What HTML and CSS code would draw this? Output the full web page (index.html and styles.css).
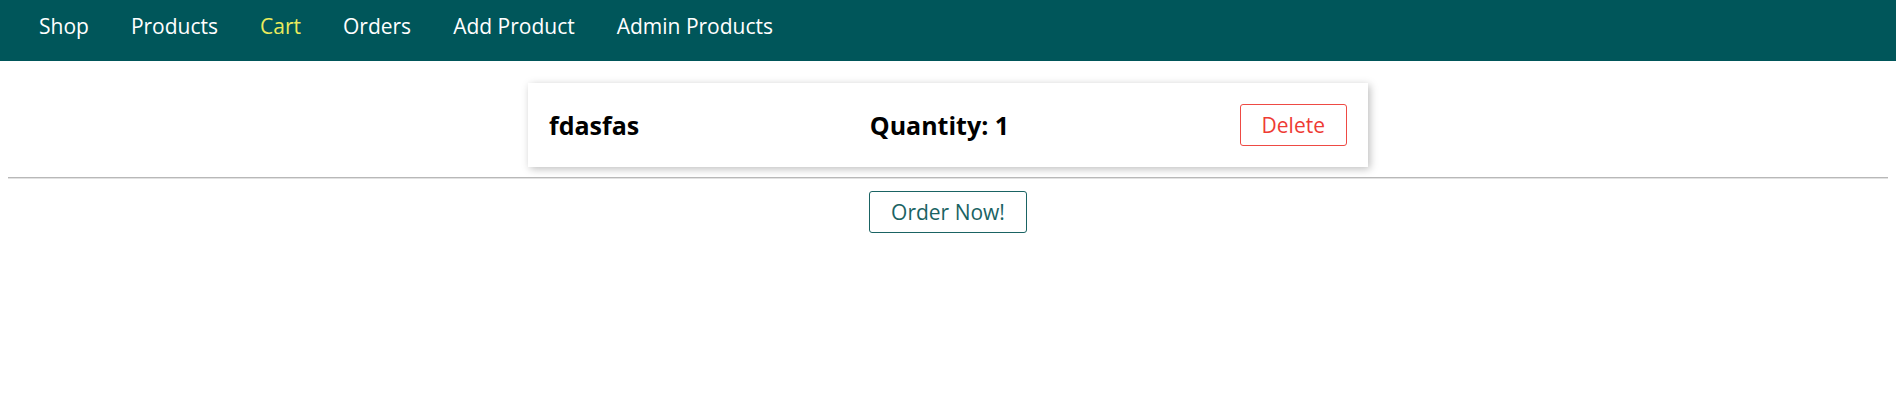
FILE: index.html
```html
<!DOCTYPE html>
<html lang="en">
<head>
<meta charset="UTF-8">
<title>Your Cart</title>
<link rel="stylesheet" href="styles.css">
</head>
<body>
<header class="main-header">
  <nav class="main-header__nav">
    <ul class="main-header__item-list">
      <li class="main-header__item"><a href="#">Shop</a></li>
      <li class="main-header__item"><a href="#">Products</a></li>
      <li class="main-header__item"><a class="active" href="#">Cart</a></li>
      <li class="main-header__item"><a href="#">Orders</a></li>
      <li class="main-header__item"><a href="#">Add Product</a></li>
      <li class="main-header__item"><a href="#">Admin Products</a></li>
    </ul>
  </nav>
</header>
<main class="main">
  <ul class="cart__item-list">
    <li class="cart__item">
      <h1 class="cart__title">fdasfas</h1>
      <h2 class="cart__qty">Quantity: 1</h2>
      <form class="cart__form">
        <button class="btn danger" type="button">Delete</button>
      </form>
    </li>
  </ul>
  <hr class="divider">
  <div class="centered">
    <form class="order-form">
      <button class="btn" type="button">Order Now!</button>
    </form>
  </div>
</main>
</body>
</html>
```

FILE: styles.css
```css
* {
  box-sizing: border-box;
}

html, body {
  margin: 0;
  padding: 0;
  background: #ffffff;
  font-family: "Open Sans", "Noto Sans", sans-serif;
  font-size: 21px;
}

.main-header {
  width: 100%;
  height: 61px;
  background-color: #00565a;
  display: flex;
  align-items: center;
  padding: 0 0 9px 39px;
}

.main-header__nav {
  height: 100%;
  display: flex;
  align-items: center;
}

.main-header__item-list {
  list-style: none;
  margin: 0;
  padding: 0;
  display: flex;
  gap: 42px;
}

.main-header__item a {
  text-decoration: none;
  color: #ffffff;
  font-size: 21px;
}

.main-header__item a.active {
  color: #ebeb5c;
}

.main {
  padding-top: 22px;
}

.cart__item-list {
  list-style: none;
  margin: 0 auto;
  padding: 0;
  width: 840px;
}

.cart__item {
  display: flex;
  justify-content: space-between;
  align-items: center;
  height: 84px;
  padding: 0 21px;
  box-shadow: 2px 2px 8px rgba(0, 0, 0, 0.26);
  background: #ffffff;
}

.cart__title,
.cart__qty {
  margin: 0;
  font-size: 25px;
  font-weight: 700;
  color: #000000;
}

.cart__form,
.order-form {
  margin: 0;
}

.btn {
  font: inherit;
  font-size: 21px;
  border: 1px solid #1a6363;
  color: #1a6363;
  background: #ffffff;
  border-radius: 3px;
  padding: 6px 21px;
  line-height: 28px;
  cursor: pointer;
}

.btn.danger {
  color: #ee3b34;
  border-color: #ee4a44;
}

.divider {
  margin: 10px 8px 12px;
  height: 0;
  border: 0;
  border-top: 1px solid #b8b8b8;
  border-bottom: 1px solid #e2e2e2;
}

.centered {
  display: flex;
  justify-content: center;
}
```
